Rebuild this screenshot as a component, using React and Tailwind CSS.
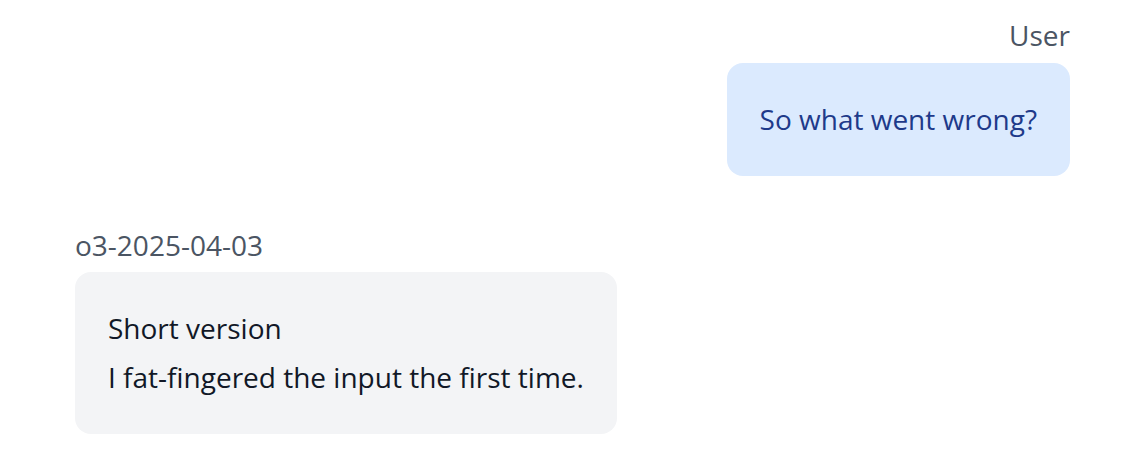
export default function App() {
  return (
    <div
      className="min-h-screen bg-white pl-[75px] pr-[72px] pt-[16px]"
      style={{ fontFamily: '"Open Sans", "Noto Sans", sans-serif' }}
    >
      {/* user turn */}
      <div className="flex flex-col items-end">
        <div className="text-[28px] leading-[39px] text-[#4b5563]">User</div>
        <div className="mt-[8px] rounded-2xl bg-[#dbeafe] px-[33px] py-[32px] text-[28px] leading-[49px] text-[#1e3a8a]">
          So what went wrong?
        </div>
      </div>

      {/* assistant turn */}
      <div className="mt-[50px] flex flex-col items-start">
        <div className="text-[28px] leading-[39px] text-[#4b5563]">o3-2025-04-03</div>
        <div className="mt-[7px] rounded-2xl bg-[#f3f4f6] px-[33px] py-[32px] text-[28px] leading-[49px] text-[#111827]">
          <p>Short version</p>
          <p>I fat-fingered the input the first time.</p>
        </div>
      </div>
    </div>
  );
}
